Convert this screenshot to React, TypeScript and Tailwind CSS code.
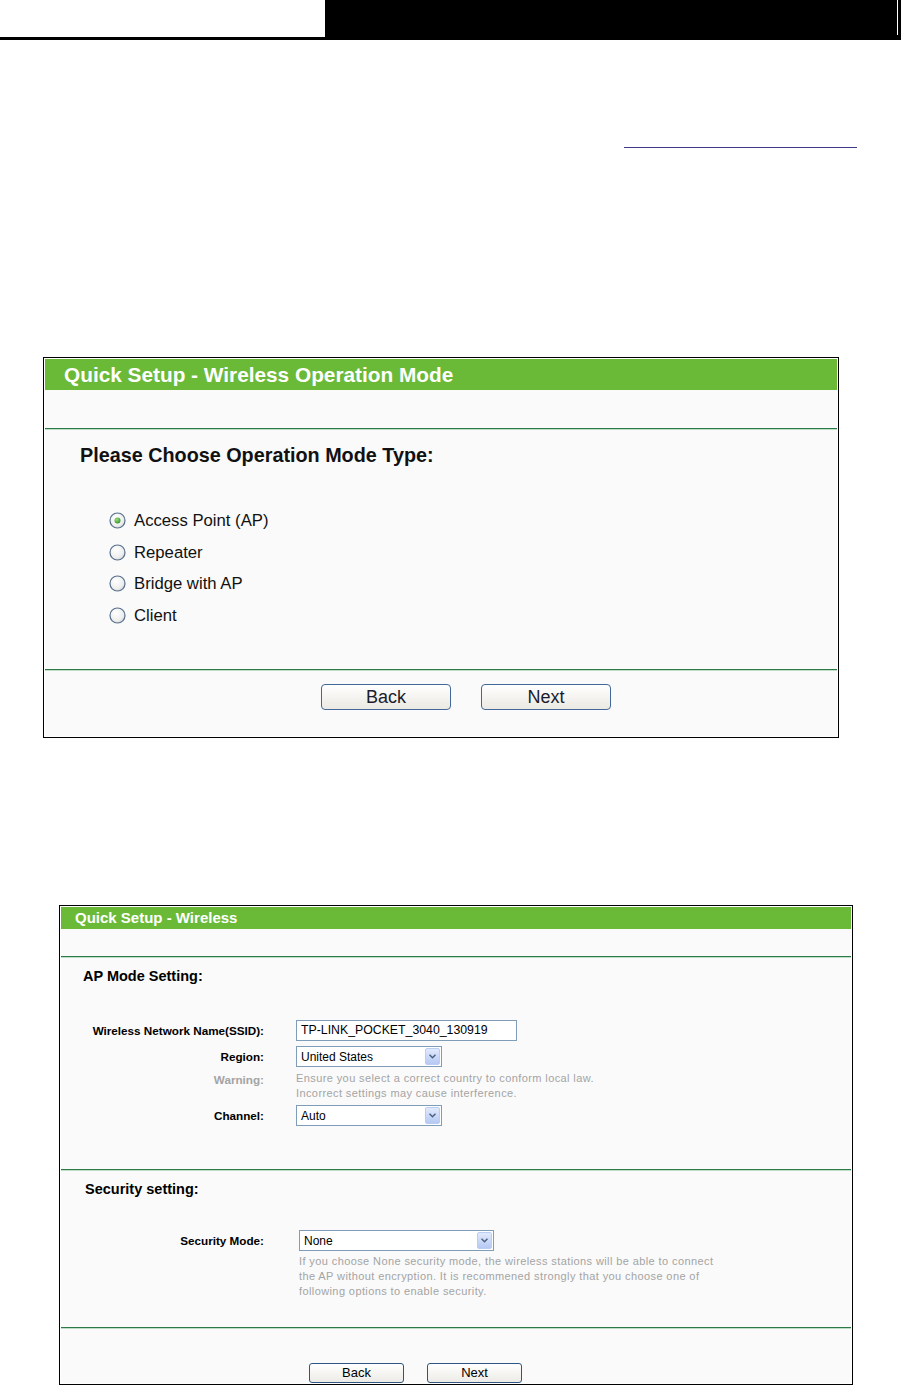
import React from 'react';

const font = { fontFamily: '"Liberation Sans", Arial, sans-serif' };

const Radio: React.FC<{ checked?: boolean }> = ({ checked }) => (
  <svg width="17" height="17" viewBox="0 0 17 17" className="shrink-0">
    <defs>
      <radialGradient id="rfill" cx="40%" cy="35%" r="70%">
        <stop offset="0%" stopColor="#ffffff" />
        <stop offset="70%" stopColor="#eeeeee" />
        <stop offset="100%" stopColor="#d6d6d6" />
      </radialGradient>
      <radialGradient id="rdot" cx="40%" cy="35%" r="70%">
        <stop offset="0%" stopColor="#9be07a" />
        <stop offset="100%" stopColor="#2f8f2a" />
      </radialGradient>
    </defs>
    <circle cx="8.5" cy="8.5" r="7.5" fill="url(#rfill)" stroke="#58708c" strokeWidth="1.2" />
    {checked && <circle cx="8.5" cy="8.5" r="3" fill="url(#rdot)" />}
  </svg>
);

const BigButton: React.FC<{ label: string }> = ({ label }) => (
  <div className="flex h-[26px] w-[130px] items-center justify-center rounded-[4px] border border-[#42689a] bg-gradient-to-b from-white to-[#ebe9e2] text-[18px] text-[#1c1c2c]">
    {label}
  </div>
);

const SmallButton: React.FC<{ label: string }> = ({ label }) => (
  <div className="flex h-[20px] w-[95px] items-center justify-center rounded-[3px] border border-[#2f5580] bg-gradient-to-b from-white to-[#ecebe6] text-[13px] text-black">
    {label}
  </div>
);

const Select: React.FC<{ value: string; width: string }> = ({ value, width }) => (
  <div className={`flex h-[21px] items-center border border-[#7f9db9] bg-white pl-[4px] ${width}`}>
    <span className="flex-1 text-[12px] text-black">{value}</span>
    <div className="mr-px flex h-[17px] w-[15px] items-center justify-center rounded-[2px] border border-[#b9cdf5] bg-gradient-to-b from-[#e1eafd] to-[#b6c9f3]">
      <svg width="7" height="5" viewBox="0 0 7 5">
        <path d="M0.5 0.8 L3.5 3.8 L6.5 0.8" fill="none" stroke="#4d6185" strokeWidth="1.5" />
      </svg>
    </div>
  </div>
);

const GreenRule: React.FC = () => (
  <div>
    <div className="h-px bg-[#2b7a47]" />
    <div className="h-px bg-[#bfdcc4]" />
  </div>
);

const Label: React.FC<{ children: React.ReactNode; muted?: boolean }> = ({ children, muted }) => (
  <div className={`w-[203px] shrink-0 text-right text-[11.7px] font-bold ${muted ? 'text-[#a4a4a4]' : 'text-black'}`}>{children}</div>
);

const OperationMode: React.FC = () => {
  const modes = ['Access Point (AP)', 'Repeater', 'Bridge with AP', 'Client'];
  return (
    <div className="ml-[43px] mt-[209px] w-[796px] border border-black bg-white p-px">
      <div className="flex h-[31px] items-center bg-[#6aba38] pl-[19px] text-[20.8px] font-bold text-white">
        Quick Setup - Wireless Operation Mode
      </div>
      <div className="h-[38px] bg-[#fafafa]" />
      <GreenRule />
      <div className="h-[239px] bg-[#fafafa] pl-[35px] pt-[13px]">
        <div className="text-[19.8px] font-bold leading-[24px] text-[#111]">Please Choose Operation Mode Type:</div>
        <div className="ml-[29px] mt-[38px] flex flex-col">
          {modes.map((m, i) => (
            <div key={m} className="flex h-[31.5px] items-center gap-[8px] text-[16.7px] text-[#111]">
              <Radio checked={i === 0} />
              <span>{m}</span>
            </div>
          ))}
        </div>
      </div>
      <GreenRule />
      <div className="flex h-[65px] gap-[30px] bg-[#fafafa] pl-[276px] pt-[13px]">
        <BigButton label="Back" />
        <BigButton label="Next" />
      </div>
    </div>
  );
};

const WirelessSetup: React.FC = () => (
  <div className="ml-[59px] mt-[167px] w-[794px] border border-black bg-white p-px">
    <div className="flex h-[22px] items-center bg-[#6aba38] pl-[14px] text-[15px] font-bold text-white">
      Quick Setup - Wireless
    </div>
    <div className="h-[27px] bg-[#fafafa]" />
    <GreenRule />
    <div className="h-[211px] bg-[#fafafa] pt-[8px]">
      <div className="pl-[22px] text-[14.5px] font-bold leading-[20px] text-black">AP Mode Setting:</div>
      <div className="mt-[34px] flex h-[21px] items-center">
        <Label>Wireless Network Name(SSID):</Label>
        <div className="ml-[32px] flex h-[21px] w-[221px] items-center border border-[#7f9db9] bg-white pl-[4px] text-[12.3px] text-black">
          TP-LINK_POCKET_3040_130919
        </div>
      </div>
      <div className="mt-[5px] flex h-[21px] items-center">
        <Label>Region:</Label>
        <div className="ml-[32px]">
          <Select value="United States" width="w-[146px]" />
        </div>
      </div>
      <div className="mt-[4px] flex">
        <Label muted>
          <span className="leading-[15px]">Warning:</span>
        </Label>
        <div className="ml-[32px] text-[11px] leading-[15px] tracking-[0.4px] text-[#a4a4a4]">
          Ensure you select a correct country to conform local law.
          <br />
          Incorrect settings may cause interference.
        </div>
      </div>
      <div className="mt-[4px] flex h-[21px] items-center">
        <Label>Channel:</Label>
        <div className="ml-[32px]">
          <Select value="Auto" width="w-[146px]" />
        </div>
      </div>
    </div>
    <GreenRule />
    <div className="h-[156px] bg-[#fafafa] pt-[8px]">
      <div className="pl-[24px] text-[14.5px] font-bold leading-[20px] text-black">Security setting:</div>
      <div className="mt-[31px] flex h-[21px] items-center">
        <Label>Security Mode:</Label>
        <div className="ml-[35px]">
          <Select value="None" width="w-[195px]" />
        </div>
      </div>
      <div className="ml-[238px] mt-[3px] text-[11px] leading-[15px] tracking-[0.4px] text-[#a4a4a4]">
        If you choose None security mode, the wireless stations will be able to connect
        <br />
        the AP without encryption. It is recommened strongly that you choose one of
        <br />
        following options to enable security.
      </div>
    </div>
    <GreenRule />
    <div className="flex h-[54px] gap-[23px] bg-[#fafafa] pl-[248px] pt-[34px]">
      <SmallButton label="Back" />
      <SmallButton label="Next" />
    </div>
  </div>
);

export default function App() {
  return (
    <div className="h-[1385px] w-[901px] overflow-hidden bg-white" style={font}>
      <div className="flex h-[40px]">
        <div className="w-[325px] bg-black">
          <div className="h-[37px] bg-white" />
        </div>
        <div className="flex flex-1 justify-end bg-black">
          <div className="mr-[3px] h-[35px] w-px bg-white" />
        </div>
      </div>
      <div className="ml-[624px] mt-[107px] h-px w-[233px] bg-[#3c3a86]" />
      <OperationMode />
      <WirelessSetup />
    </div>
  );
}
